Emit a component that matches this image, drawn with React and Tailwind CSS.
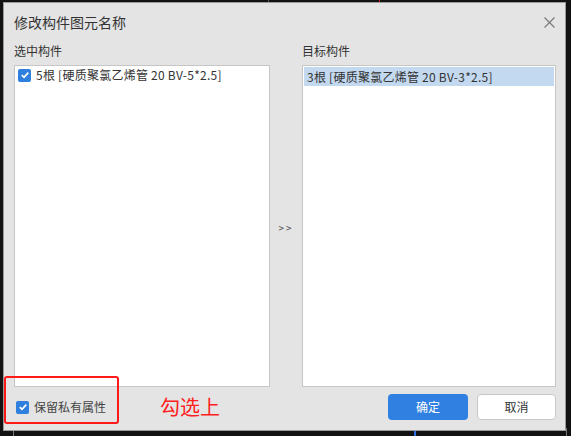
const font = { fontFamily: '"Noto Sans CJK SC", "Noto Sans", sans-serif' };

const CheckBox = () => (
  <span className="flex h-[13px] w-[13px] items-center justify-center rounded-[2px] bg-[#2f7fde]">
    <svg width="10" height="10" viewBox="0 0 10 10">
      <path d="M1.8 5.2 L4 7.3 L8.3 2.6" fill="none" stroke="white" strokeWidth="1.7" />
    </svg>
  </span>
);

export default function App() {
  return (
    <div className="relative h-[436px] w-[571px] overflow-hidden bg-[#121212] pl-[3px] pt-[2px]" style={font}>
      {/* bits of the drawing behind the dialog */}
      <div className="absolute left-[268px] top-0 h-[2px] w-[1px] bg-[#555]" />
      <div className="absolute left-[379px] top-0 h-[2px] w-[1px] bg-[#c02020]" />
      <div className="absolute left-[414px] top-[431px] h-[5px] w-[2px] bg-[#2f6fe0]" />
      <div className="absolute left-[13px] top-[431px] h-[5px] w-[1px] bg-[#777]" />
      <div className="absolute left-[566px] top-[428px] h-[8px] w-[1px] bg-[#777]" />

      <div className="flex h-[429px] w-[563px] flex-col border border-[#9a9a9a] bg-[#e4e4e4] pl-[10px] pr-[9px]">
        <div className="flex h-[39px] items-center justify-between">
          <span className="text-[14px] text-[#333]">修改构件图元名称</span>
          <svg width="11" height="11" viewBox="0 0 11 11" className="mr-[1px]">
            <path d="M0.5 0.5 L10.5 10.5 M10.5 0.5 L0.5 10.5" stroke="#7a7a7a" strokeWidth="1.2" />
          </svg>
        </div>
        <div className="flex h-[23px] items-start text-[12px] text-[#333]">
          <span className="w-[288px]">选中构件</span>
          <span>目标构件</span>
        </div>
        <div className="flex h-[322px]">
          <div className="w-[256px] border border-[#c6c6c6] bg-white p-[2px]">
            <div className="flex items-center gap-[5px] pl-[1px] text-[12px] leading-[14px] text-[#333]">
              <CheckBox />
              <span className="tracking-[0.25px]">5根 [硬质聚氯乙烯管 20 BV-5*2.5]</span>
            </div>
          </div>
          <div className="flex w-[32px] items-center justify-center pt-[2px] text-[10px] tracking-[2px] text-[#444]">&gt;&gt;</div>
          <div className="w-[254px] border border-[#c6c6c6] bg-white p-[1px]">
            <div className="flex h-[19px] items-center bg-[#c3d9f0] pl-[3px] text-[12px] tracking-[0.25px] text-[#333]">
              3根 [硬质聚氯乙烯管 20 BV-3*2.5]
            </div>
          </div>
        </div>
        <div className="flex flex-1 items-center justify-between pb-[3px]">
          <div className="flex items-center">
            <div className="ml-[2px] flex items-center gap-[5px] text-[12px] text-[#444]">
              <CheckBox />
              <span>保留私有属性</span>
            </div>
            <span className="ml-[54px] text-[20px] text-[#ff2020]">勾选上</span>
          </div>
          <div className="flex gap-[9px]">
            <button className="h-[26px] w-[80px] rounded-[4px] bg-[#2f80e0] text-[12px] text-white">确定</button>
            <button className="h-[26px] w-[79px] rounded-[4px] border border-[#c8c8c8] bg-white text-[12px] text-[#333]">取消</button>
          </div>
        </div>
      </div>
      <div className="absolute left-[4px] top-[376px] h-[48px] w-[115px] rounded-[3px] border-[2.5px] border-[#ff1a1a]" />
    </div>
  );
}
